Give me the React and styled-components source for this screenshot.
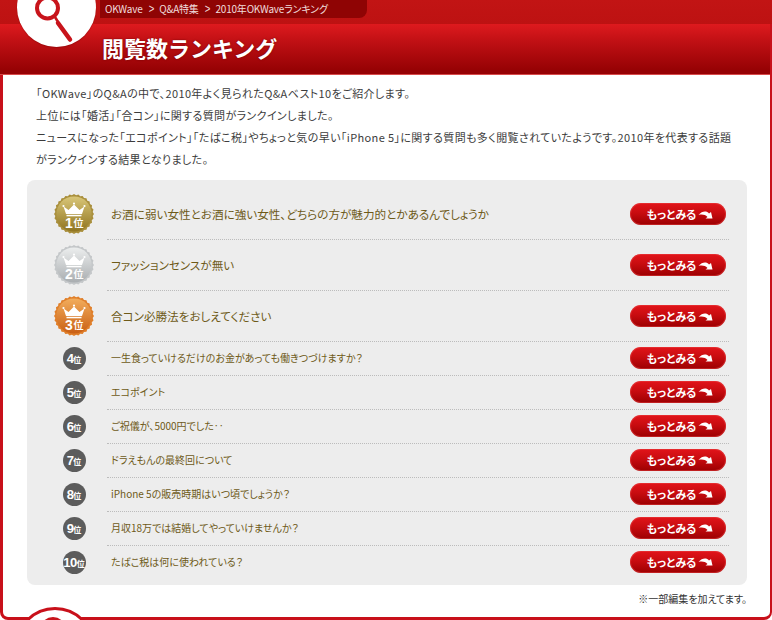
import React from "react";
import styled, { createGlobalStyle } from "styled-components";

const FONT = '"Noto Sans CJK JP", "Liberation Sans", sans-serif';

const rows = [
  { rank: 1, text: "お酒に弱い女性とお酒に強い女性、どちらの方が魅力的とかあるんでしょうか" },
  { rank: 2, text: "ファッションセンスが無い" },
  { rank: 3, text: "合コン必勝法をおしえてください" },
  { rank: 4, text: "一生食っていけるだけのお金があっても働きつづけますか？" },
  { rank: 5, text: "エコポイント" },
  { rank: 6, text: "ご祝儀が、5000円でした‥" },
  { rank: 7, text: "ドラえもんの最終回について" },
  { rank: 8, text: "iPhone 5の販売時期はいつ頃でしょうか？" },
  { rank: 9, text: "月収18万では結婚してやっていけませんか？" },
  { rank: 10, text: "たばこ税は何に使われている？" },
];

const medals = {
  1: ["#d9c678", "#8f7420", "#a98f3c"],
  2: ["#eceeee", "#a9adb0", "#c4c7c9"],
  3: ["#f2ad5c", "#c95f14", "#e07f2a"],
};

// scalloped edge of the top three medals
const burst = () => {
  const pts = [];
  for (let i = 0; i < 56; i++) {
    const r = i % 2 ? 18.8 : 20;
    const a = (i / 56) * Math.PI * 2;
    pts.push(`${(20 + r * Math.cos(a)).toFixed(2)},${(20 + r * Math.sin(a)).toFixed(2)}`);
  }
  return pts.join(" ");
};

const Medal = ({ rank }) => {
  const [top, bottom, edge] = medals[rank];
  return (
    <svg width="40" height="40" viewBox="0 0 40 40">
      <defs>
        <linearGradient id={`medal${rank}`} x1="0" y1="0" x2="0" y2="1">
          <stop offset="0" stopColor={top} />
          <stop offset="1" stopColor={bottom} />
        </linearGradient>
      </defs>
      <polygon points={burst()} fill={edge} />
      <circle cx="20" cy="20" r="17.6" fill={`url(#medal${rank})`} />
      <path d="M9.5 12.5L14.5 16 20 10.5 25.5 16 30.5 12.5 28 20H12z" fill="#fff" />
      <rect x="12.5" y="20.8" width="15" height="1.5" fill="#fff" />
      <circle cx="9.5" cy="12" r="1.1" fill="#fff" />
      <circle cx="20" cy="9.6" r="1.1" fill="#fff" />
      <circle cx="30.5" cy="12" r="1.1" fill="#fff" />
      <text x="11" y="33.5" fill="#fff" fontFamily="Liberation Sans" fontWeight="700" fontSize="14">
        {rank}
      </text>
      <text x="19.5" y="33" fill="#fff" fontFamily="Noto Sans CJK JP" fontWeight="700" fontSize="10">
        位
      </text>
    </svg>
  );
};

const Arrow = () => (
  <svg width="15" height="9" viewBox="0 0 15 9">
    <path d="M0.5 5C4 1 8.5 0.5 11 3.5L13 2 14.5 8.5H7.5L9.5 7C7 4.5 4 4 0.5 5z" fill="#fff" />
  </svg>
);

export default function App() {
  return (
    <Page>
      <GlobalStyle />
      <TopBand>
        <Breadcrumb>
          <span>OKWave</span>
          <Sep>&gt;</Sep>
          <span>Q&amp;A特集</span>
          <Sep>&gt;</Sep>
          <span>2010年OKWaveランキング</span>
        </Breadcrumb>
      </TopBand>
      <Logo>
        <svg width="42" height="50" viewBox="0 0 42 50">
          <circle cx="14.5" cy="14" r="10.5" fill="none" stroke="#c8141b" strokeWidth="4" />
          <path d="M22 23L25 28" stroke="#c8141b" strokeWidth="2.5" />
          <path d="M25 29L37 45.5" stroke="#c8141b" strokeWidth="4.5" strokeLinecap="round" />
        </svg>
      </Logo>
      <Panel>
        <Header>
          <Title>閲覧数ランキング</Title>
        </Header>
        <Body>
          <Intro>
            <p>「OKWave」のQ&amp;Aの中で、2010年よく見られたQ&amp;Aベスト10をご紹介します。</p>
            <p>上位には「婚活」「合コン」に関する質問がランクインしました。</p>
            <p>
              ニュースになった「エコポイント」「たばこ税」やちょっと気の早い「iPhone 5」に関する質問も多く閲覧されていたようです。2010年を代表する話題がランクインする結果となりました。
            </p>
          </Intro>
          <RankBox>
            {rows.map((row) => (
              <Row key={row.rank} $large={row.rank <= 3}>
                <BadgeCell>
                  {row.rank <= 3 ? (
                    <Medal rank={row.rank} />
                  ) : (
                    <Badge>
                      {row.rank}
                      <small>位</small>
                    </Badge>
                  )}
                </BadgeCell>
                <RowMain $large={row.rank <= 3} $last={row.rank === 10}>
                  <Question $large={row.rank <= 3}>{row.text}</Question>
                  <MoreButton>
                    もっとみる
                    <Arrow />
                  </MoreButton>
                </RowMain>
              </Row>
            ))}
          </RankBox>
          <Note>※一部編集を加えてます。</Note>
        </Body>
      </Panel>
      <NextLogo>
        <NextGlass />
      </NextLogo>
    </Page>
  );
}

const GlobalStyle = createGlobalStyle`
  html, body {
    margin: 0;
    background: #fff;
  }
  p {
    margin: 0;
  }
`;

const Page = styled.div`
  position: relative;
  display: flex;
  flex-direction: column;
  width: 772px;
  height: 620px;
  overflow: hidden;
  font-family: ${FONT};
  font-feature-settings: "palt";
`;

const TopBand = styled.div`
  flex: none;
  height: 24px;
  background: linear-gradient(to bottom, #c21414, #bd1212);
`;

const Breadcrumb = styled.div`
  display: flex;
  align-items: center;
  gap: 5px;
  box-sizing: border-box;
  width: 267px;
  height: 18px;
  margin-left: 100px;
  padding-left: 5px;
  background: #8f0404;
  border-radius: 0 0 8px 0;
  color: #efdcdc;
  font-size: 10px;
  letter-spacing: -0.2px;
  line-height: 18px;
  white-space: nowrap;
`;

const Sep = styled.span`
  font-family: "Liberation Sans", sans-serif;
  font-size: 12px;
  transform: scaleX(0.8);
`;

const Logo = styled.div`
  position: absolute;
  left: 17px;
  top: -32px;
  display: flex;
  align-items: flex-start;
  width: 79px;
  height: 79px;
  background: #fff;
  border-radius: 50%;
  box-shadow: 0 1px 1px rgba(120, 0, 0, 0.4);

  svg {
    margin: 26px 0 0 16px;
  }
`;

const Panel = styled.div`
  flex: 1;
  display: flex;
  flex-direction: column;
  min-height: 0;
  background: #fff;
  border-style: solid;
  border-color: #c8101a;
  border-width: 0 2px 3px 3px;
  border-radius: 0 0 8px 8px;
`;

const Header = styled.div`
  flex: none;
  box-sizing: border-box;
  height: 51px;
  margin: 0 0 0 -3px;
  padding-left: 102px;
  background: linear-gradient(to bottom, #de1a1e 0%, #c01014 35%, #960204 92%);
  border-bottom: 1px solid #d84a4a;
`;

const Title = styled.h1`
  margin: 0;
  color: #fff;
  font-size: 22px;
  font-weight: 700;
  font-feature-settings: normal;
  line-height: 47px;
  text-shadow: 0 0 2px rgba(90, 0, 0, 0.8);
`;

const Body = styled.div`
  flex: 1;
  padding: 7px 23px 0 24px;
`;

const Intro = styled.div`
  padding: 0 14px 0 9px;
  color: #3c3c3c;
  font-size: 11px;
  line-height: 22px;
  letter-spacing: 0.38px;
`;

const RankBox = styled.div`
  margin-top: 10px;
  padding: 9px 18px 5px 27px;
  background: #ededed;
  border-radius: 8px;
`;

const Row = styled.div`
  display: flex;
  height: ${(p) => (p.$large ? "51px" : "34px")};
`;

const BadgeCell = styled.div`
  flex: none;
  display: flex;
  align-items: center;
  justify-content: center;
  box-sizing: border-box;
  width: 40px;
  margin-right: 13px;
  padding-bottom: 2px;
`;

const Badge = styled.div`
  display: flex;
  align-items: baseline;
  justify-content: center;
  width: 23px;
  height: 23px;
  background: #5c5c5c;
  border-radius: 50%;
  color: #fff;
  font-family: "Liberation Sans", sans-serif;
  font-size: 13px;
  font-weight: 700;
  letter-spacing: -0.5px;
  line-height: 23px;

  small {
    font-family: ${FONT};
    font-size: 8px;
    letter-spacing: 0;
  }
`;

const RowMain = styled.div`
  flex: 1;
  display: flex;
  align-items: center;
  justify-content: space-between;
  box-sizing: border-box;
  padding: 0 3px ${(p) => (p.$large ? "0" : "2px")} 4px;
  border-bottom: ${(p) => (p.$last ? "1px solid transparent" : "1px dotted #bcbcbc")};
`;

const Question = styled.span`
  color: #6e5a18;
  font-size: ${(p) => (p.$large ? "11.6px" : "10px")};
`;

const MoreButton = styled.div`
  display: flex;
  align-items: center;
  justify-content: center;
  gap: 2px;
  box-sizing: border-box;
  width: 96px;
  height: 22px;
  padding-left: 4px;
  background: linear-gradient(to bottom, #e2141a 0%, #c80c10 45%, #9c0002 100%);
  border-radius: 11px;
  box-shadow: inset 0 0 0 1px rgba(235, 70, 70, 0.45);
  color: #fff;
  font-size: 11px;
  font-weight: 700;
`;

const Note = styled.div`
  margin-top: 7px;
  color: #333;
  font-size: 10px;
  line-height: 14px;
  text-align: right;
`;

const NextLogo = styled.div`
  position: absolute;
  left: 15px;
  top: 607px;
  box-sizing: border-box;
  width: 80px;
  height: 80px;
  background: #fff;
  border: 3px solid #c8101a;
  border-radius: 50%;
`;

const NextGlass = styled.div`
  position: absolute;
  left: 22px;
  top: 7px;
  width: 18px;
  height: 18px;
  border: 4px solid #c8141b;
  border-radius: 50%;
`;
